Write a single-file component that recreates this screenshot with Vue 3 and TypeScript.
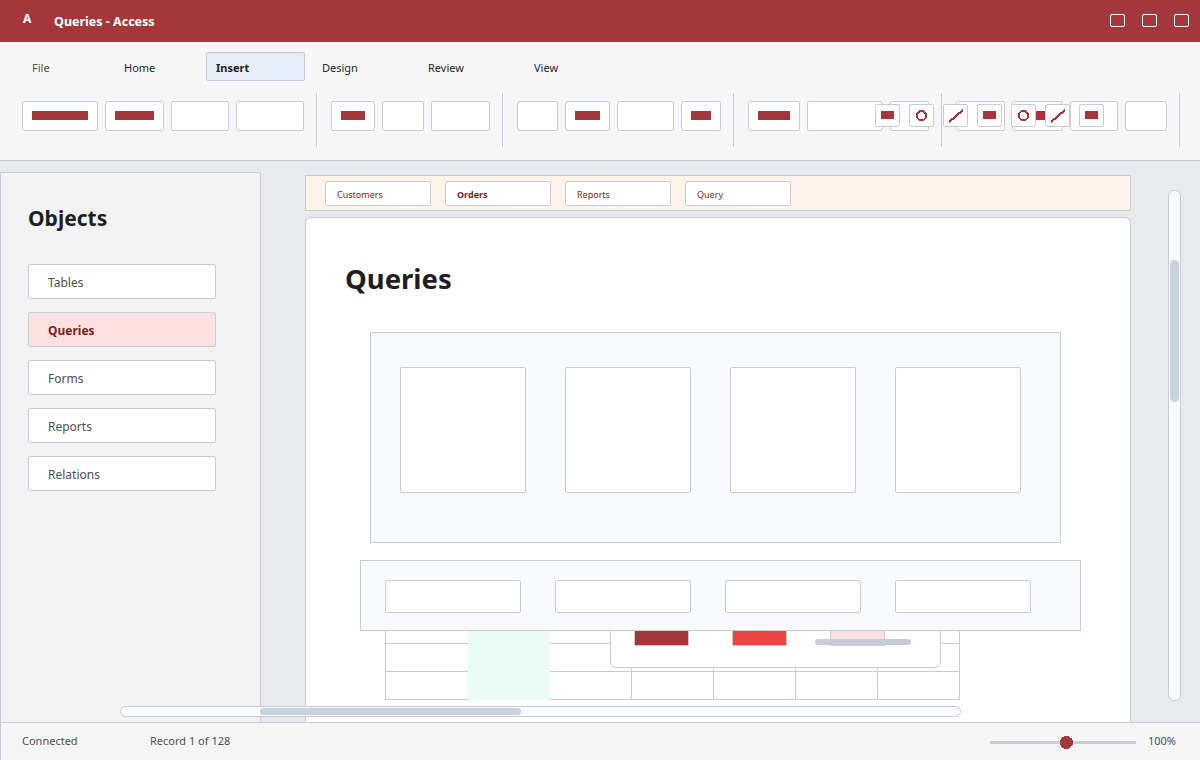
<template>
  <div class="window">
    <header class="titlebar">
      <span class="logo">A</span>
      <span class="doc-title">Queries - Access</span>
      <div class="win-controls">
        <i></i><i></i><i></i>
      </div>
    </header>

    <section class="ribbon">
      <nav class="ribbon-tabs">
        <span
          v-for="t in ribbonTabs"
          :key="t"
          class="ribbon-tab"
          :class="['tab-' + t.toLowerCase(), { active: t === 'Insert' }]"
        >{{ t }}</span>
      </nav>
      <div class="tools">
        <div v-for="(group, g) in toolGroups" :key="g" class="tool-group">
          <button
            v-for="(tool, i) in group"
            :key="i"
            class="tool"
            :style="{ width: tool.w + 'px' }"
          >
            <span v-if="tool.bar" class="tool-bar"></span>
          </button>
        </div>
      </div>
      <div class="mini-tools">
        <button v-for="(kind, i) in miniTools" :key="i" class="mini">
          <span v-if="kind === 'rect'" class="mini-rect"></span>
          <svg v-else-if="kind === 'circle'" class="mini-icon" width="11" height="11" viewBox="0 0 11 11" shape-rendering="crispEdges">
            <circle cx="5.5" cy="5.5" r="4.5" fill="none" stroke="#a4373a" stroke-width="2" />
          </svg>
          <svg v-else width="16" height="14" viewBox="0 0 16 14" shape-rendering="crispEdges">
            <line x1="1" y1="13" x2="15" y2="1" stroke="#a4373a" stroke-width="2.2" />
          </svg>
        </button>
      </div>
    </section>

    <div class="workspace">
      <aside class="sidebar">
        <h2>Objects</h2>
        <ul>
          <li v-for="o in objects" :key="o" :class="{ current: o === 'Queries' }">{{ o }}</li>
        </ul>
      </aside>

      <main class="main">
        <div class="doc-tabs">
          <span v-for="d in docTabs" :key="d" class="doc-tab" :class="{ open: d === 'Orders' }">{{ d }}</span>
        </div>
        <div class="card">
          <h1>Queries</h1>
          <div class="tile-panel">
            <div v-for="n in 4" :key="n" class="tile"></div>
          </div>
          <div class="field-panel">
            <div v-for="n in 4" :key="n" class="field"></div>
          </div>
          <div class="table-wrap">
            <table class="grid">
              <tbody>
                <tr v-for="r in 4" :key="r">
                  <td v-for="c in 7" :key="c" :class="{ green: c === 2 }"></td>
                </tr>
              </tbody>
            </table>
            <div class="popup">
              <span class="swatch dark"></span>
              <span class="swatch red"></span>
              <span class="swatch pink"></span>
              <span class="popup-slider"></span>
            </div>
          </div>
        </div>
      </main>

      <div class="vscroll"><span></span></div>
      <div class="hscroll"><span></span></div>
    </div>

    <footer class="statusbar">
      <span class="status-conn">Connected</span>
      <span>Record 1 of 128</span>
      <div class="zoom">
        <div class="zoom-track">
          <svg class="zoom-thumb" width="13" height="13" viewBox="0 0 13 13" shape-rendering="crispEdges">
            <circle cx="6.5" cy="6.5" r="6.5" fill="#a4373a" />
          </svg>
        </div>
        <span>100%</span>
      </div>
    </footer>
  </div>
</template>

<script setup lang="ts">
interface Tool {
  w: number
  bar: boolean
}

const ribbonTabs = ['File', 'Home', 'Insert', 'Design', 'Review', 'View']
const objects = ['Tables', 'Queries', 'Forms', 'Reports', 'Relations']
const docTabs = ['Customers', 'Orders', 'Reports', 'Query']
const miniTools = ['rect', 'circle', 'line', 'rect', 'circle', 'line', 'rect']

const toolGroups: Tool[][] = [
  [
    { w: 76, bar: true },
    { w: 59, bar: true },
    { w: 58, bar: false },
    { w: 68, bar: false }
  ],
  [
    { w: 44, bar: true },
    { w: 42, bar: false },
    { w: 59, bar: false }
  ],
  [
    { w: 41, bar: false },
    { w: 45, bar: true },
    { w: 57, bar: false },
    { w: 40, bar: true }
  ],
  [
    { w: 52, bar: true },
    { w: 76, bar: false },
    { w: 39, bar: false }
  ],
  [
    { w: 49, bar: false },
    { w: 51, bar: true },
    { w: 48, bar: false },
    { w: 42, bar: false }
  ]
]
</script>

<style>
html,
body {
  margin: 0;
  background: #e8eaee;
}
</style>

<style scoped>
.window {
  width: 1200px;
  height: 760px;
  display: flex;
  flex-direction: column;
  overflow: hidden;
  background: #e8eaee;
  font-family: "Noto Sans", "Liberation Sans", sans-serif;
  color: #1f1f1f;
}

.titlebar {
  height: 42px;
  flex: none;
  display: flex;
  align-items: center;
  background: #a4373a;
  color: #fff;
  padding: 0 11px 0 23px;
}

.logo {
  width: 31px;
  font-size: 12px;
  font-weight: 700;
  margin-top: -5px;
}

.doc-title {
  font-size: 12.5px;
  font-weight: 700;
}

.win-controls {
  margin-left: auto;
  margin-top: -1px;
  display: flex;
  gap: 17px;
}

.win-controls i {
  width: 15px;
  height: 13px;
  box-sizing: border-box;
  border: 1px solid #fff;
  border-radius: 2px;
}

.ribbon {
  position: relative;
  height: 119px;
  flex: none;
  box-sizing: border-box;
  background: #f7f7f7;
  border-bottom: 1px solid #c8ccd8;
  padding: 10px 0 0 22px;
}

.ribbon-tabs {
  display: flex;
  height: 29px;
}

.ribbon-tab {
  box-sizing: border-box;
  width: 92px;
  padding-left: 9px;
  font-size: 11px;
  line-height: 29px;
  border: 1px solid transparent;
  border-radius: 2px;
}

.ribbon-tab.tab-file {
  color: #505050;
}

.ribbon-tab.active {
  width: 99px;
  margin-right: 7px;
  background: #e5edf7;
  border-color: #c8ccd8;
  font-weight: 700;
}

.ribbon-tab.tab-design,
.ribbon-tab.tab-review,
.ribbon-tab.tab-view {
  width: 106px;
}

.tools {
  display: flex;
  margin-top: 12px;
}

.tool-group {
  display: flex;
  gap: 7px;
  height: 54px;
  padding-right: 12px;
  margin-right: 14px;
  border-right: 1px solid #c8ccd8;
}

.tool {
  box-sizing: border-box;
  height: 30px;
  margin-top: 8px;
  padding: 9px 9px 0;
  display: flex;
  align-items: flex-start;
  background: #fff;
  border: 1px solid #c8ccd8;
  border-radius: 2px;
}

.tool-bar {
  display: block;
  width: 100%;
  height: 9px;
  background: #a4373a;
}

.mini-tools {
  position: absolute;
  left: 875px;
  top: 62px;
  display: flex;
  gap: 9px;
}

.mini {
  box-sizing: border-box;
  width: 25px;
  height: 23px;
  padding: 0;
  display: flex;
  align-items: center;
  justify-content: center;
  background: #fff;
  border: 1px solid #c8ccd8;
  border-radius: 2px;
}

.mini-rect {
  width: 13px;
  height: 8px;
  margin-top: -1px;
  background: #a4373a;
}

.mini-icon {
  margin-top: -1px;
}

.workspace {
  position: relative;
  flex: 1;
  min-height: 0;
  display: flex;
  overflow: hidden;
}

.sidebar {
  box-sizing: border-box;
  width: 261px;
  flex: none;
  margin-top: 11px;
  padding: 32px 27px 0;
  background: #f3f3f3;
  border: 1px solid #c8ccd8;
  border-bottom: none;
}

.sidebar h2 {
  margin: 0;
  font-size: 21px;
  line-height: 27px;
  font-weight: 700;
}

.sidebar ul {
  list-style: none;
  margin: 32px 0 0;
  padding: 0;
  display: flex;
  flex-direction: column;
  gap: 13px;
}

.sidebar li {
  box-sizing: border-box;
  width: 188px;
  height: 35px;
  padding-left: 19px;
  font-size: 12px;
  line-height: 35px;
  color: #505050;
  background: #fff;
  border: 1px solid #c8ccd8;
  border-radius: 2px;
}

.sidebar li.current {
  background: #fde0e0;
  color: #7f1d1d;
  font-weight: 700;
}

.main {
  width: 826px;
  flex: none;
  margin-left: 44px;
  padding-top: 14px;
  display: flex;
  flex-direction: column;
  gap: 6px;
}

.doc-tabs {
  box-sizing: border-box;
  height: 36px;
  flex: none;
  display: flex;
  gap: 14px;
  padding: 5px 19px 0;
  background: #fff4ea;
  border: 1px solid #c8ccd8;
}

.doc-tab {
  box-sizing: border-box;
  width: 106px;
  height: 25px;
  padding-left: 11px;
  font-size: 9px;
  line-height: 25px;
  color: #8a1c1c;
  background: #fff;
  border: 1px solid #c8ccd8;
  border-radius: 2px;
}

.doc-tab.open {
  font-weight: 700;
  color: #7f1d1d;
}

.card {
  flex: 1;
  min-height: 0;
  box-sizing: border-box;
  padding: 40px 0 0 39px;
  overflow: hidden;
  background: #fff;
  border: 1px solid #c8ccd8;
  border-bottom: none;
  border-radius: 6px 6px 0 0;
}

.card h1 {
  margin: 0;
  font-size: 27.5px;
  line-height: 42px;
  font-weight: 700;
}

.tile-panel {
  box-sizing: border-box;
  width: 691px;
  height: 211px;
  margin: 32px 0 0 25px;
  padding: 34px 29px;
  display: flex;
  gap: 39px;
  background: #f9fafb;
  border: 1px solid #c8ccd8;
}

.tile {
  box-sizing: border-box;
  width: 126px;
  height: 126px;
  background: #fff;
  border: 1px solid #c8ccd8;
  border-radius: 2px;
}

.field-panel {
  position: relative;
  z-index: 2;
  box-sizing: border-box;
  width: 721px;
  height: 71px;
  margin: 17px 0 0 15px;
  padding: 19px 24px;
  display: flex;
  gap: 34px;
  background: #f9fafb;
  border: 1px solid #c8ccd8;
}

.field {
  box-sizing: border-box;
  width: 136px;
  height: 33px;
  background: #fff;
  border: 1px solid #c8ccd8;
  border-radius: 2px;
}

.table-wrap {
  position: relative;
  margin: -44px 0 0 40px;
  width: 575px;
}

.grid {
  border-collapse: collapse;
  table-layout: fixed;
  width: 575px;
}

.grid td {
  height: 27px;
  padding: 0;
  border: 1px solid #c8ccd8;
}

.grid td:first-child {
  border-right: none;
}

.grid td.green {
  background: #eafcf5;
  border-color: #eafcf5;
}

.popup {
  position: absolute;
  left: 225px;
  top: -17px;
  box-sizing: border-box;
  width: 331px;
  height: 98px;
  padding: 29px 0 0 23px;
  display: flex;
  align-items: flex-start;
  gap: 43px;
  background: #fff;
  border: 1px solid #c8ccd8;
  border-radius: 6px;
}

.swatch {
  box-sizing: border-box;
  width: 55px;
  height: 46px;
  border: 1px solid #c8ccd8;
}

.swatch.dark {
  background: #a4373a;
}

.swatch.red {
  background: #ef4444;
}

.swatch.pink {
  background: #fde0e0;
}

.popup-slider {
  position: absolute;
  left: 204px;
  top: 68px;
  width: 96px;
  height: 6px;
  background: #c8ccd8;
  border-radius: 3px;
}

.vscroll {
  position: absolute;
  left: 1168px;
  top: 29px;
  box-sizing: border-box;
  width: 13px;
  height: 511px;
  padding: 69px 1px 0;
  background: #f9fafb;
  border: 1px solid #c8ccd8;
  border-radius: 6px;
}

.vscroll span {
  display: block;
  height: 142px;
  background: #c9d3e0;
  border-radius: 5px;
}

.hscroll {
  position: absolute;
  left: 120px;
  top: 545px;
  box-sizing: border-box;
  width: 841px;
  height: 11px;
  padding: 1px 0 0 139px;
  background: #f9fafb;
  border: 1px solid #c8ccd8;
  border-radius: 6px;
}

.hscroll span {
  display: block;
  width: 261px;
  height: 7px;
  background: #c9d3e0;
  border-radius: 4px;
}

.statusbar {
  position: relative;
  height: 38px;
  flex: none;
  box-sizing: border-box;
  display: flex;
  align-items: center;
  padding: 0 24px 2px 21px;
  font-size: 11px;
  color: #505050;
  background: #f6f6f6;
  border-top: 1px solid #c8ccd8;
  border-left: 1px solid #c8ccd8;
}

.status-conn {
  width: 128px;
}

.zoom {
  margin-left: auto;
  display: flex;
  align-items: center;
  gap: 12px;
}

.zoom-track {
  position: relative;
  width: 146px;
  height: 3px;
  margin-top: 3px;
  background: #c8ccd8;
}

.zoom-thumb {
  position: absolute;
  left: 70px;
  top: -5px;
  display: block;
}
</style>
